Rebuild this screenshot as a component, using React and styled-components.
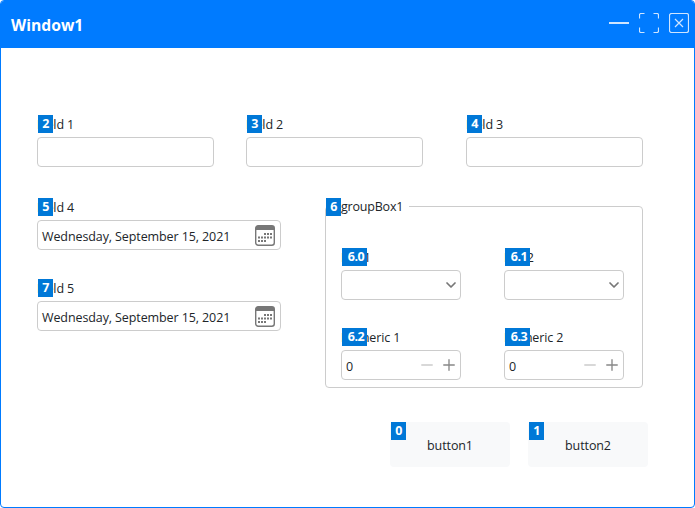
import React from "react";
import styled, { createGlobalStyle } from "styled-components";
import { ChevronDown, Minus, Plus } from "lucide-react";

const GlobalStyle = createGlobalStyle`
  html, body {
    margin: 0;
    background: #fff;
  }
  * {
    box-sizing: border-box;
  }
`;

const Window = styled.div`
  width: 695px;
  height: 508px;
  border: 1px solid #007bff;
  border-radius: 4px;
  background: #fff;
  color: #212529;
  font-family: "Open Sans", "Noto Sans", sans-serif;
  font-size: 12.5px;
  letter-spacing: -0.1px;
  overflow: hidden;
`;

const TitleBar = styled.header`
  height: 47px;
  background: #007bff;
  display: flex;
  align-items: center;
  justify-content: space-between;
  padding: 0 5px 0 10px;
  color: #fff;
`;

const Title = styled.h1`
  margin: 0;
  font-size: 15.7px;
  font-weight: 700;
  letter-spacing: 0;
`;

const WindowControls = styled.div`
  display: flex;
  gap: 10px;
  margin-bottom: 3px;
`;

const ControlIcon = styled.svg`
  width: 20px;
  height: 20px;
  fill: none;
  stroke: #cfe5ff;
  stroke-width: 1.2;
  display: block;
`;

const Content = styled.main`
  padding: 67px 51px 0 36px;
`;

const TopRow = styled.div`
  display: grid;
  grid-template-columns: 209px 220px 177px;
`;

const MiddleRow = styled.div`
  display: flex;
  justify-content: space-between;
  margin-top: 31px;
`;

const LeftColumn = styled.div`
  width: 244px;
  display: flex;
  flex-direction: column;
  gap: 29px;
`;

const Field = styled.div`
  position: relative;
  width: ${(p) => p.$width || "100%"};
`;

const Label = styled.label`
  display: block;
  height: 18px;
  line-height: 20px;
  margin-bottom: 4px;
`;

const Badge = styled.span`
  position: absolute;
  top: 0;
  left: ${(p) => p.$left ?? 1}px;
  width: ${(p) => (p.$wide ? 25 : 15)}px;
  height: 18px;
  padding-left: ${(p) => (p.$wide ? 3 : 0)}px;
  background: #0078d7;
  color: #fff;
  font-size: 12.5px;
  font-weight: 700;
  letter-spacing: -0.5px;
  line-height: 17px;
  text-align: center;
`;

const InputBox = styled.div`
  height: 30px;
  border: 1px solid #ccc;
  border-radius: 4px;
  display: flex;
  align-items: center;
  justify-content: space-between;
  padding: 0 ${(p) => p.$right ?? 5}px 0 4px;
  background: #fff;
`;

const Value = styled.span`
  padding-top: 2px;
`;

const CalendarIcon = styled.svg`
  width: 20px;
  height: 21px;
  display: block;
`;

const GroupBox = styled.fieldset`
  width: 318px;
  height: 190px;
  margin: 0;
  padding: 34px 15px 0;
  border: 1px solid #ccc;
  border-radius: 4px;
`;

const Legend = styled.legend`
  position: relative;
  height: 16px;
  padding: 0 6px 0 15px;
  margin-left: -15px;
  line-height: 18px;
  letter-spacing: -0.2px;
`;

const GroupGrid = styled.div`
  display: grid;
  grid-template-columns: 120px 120px;
  column-gap: 43px;
  row-gap: 28px;
`;

const Footer = styled.div`
  display: flex;
  justify-content: flex-end;
  gap: 18px;
  margin: 34px -5px 0 0;
`;

const ActionButton = styled.button`
  position: relative;
  width: 120px;
  height: 45px;
  border: none;
  border-radius: 4px;
  background: #f8f9fa;
  color: #212529;
  font: inherit;
  letter-spacing: inherit;
  padding: 2px 0 0;
`;

const Stepper = styled.div`
  display: flex;
  gap: 4px;
  align-items: center;
`;

const Calendar = () => (
  <CalendarIcon viewBox="0 0 20 21">
    <rect x=".7" y=".7" width="18.6" height="19.6" rx="2.5" fill="#fff" stroke="#777" strokeWidth="1.4" />
    <path d="M.7 3.2A2.5 2.5 0 0 1 3.2.7h13.6a2.5 2.5 0 0 1 2.5 2.5V5H.7z" fill="#777" />
    <path
      d="M9 9h8M3 12.5h14M3 16h8"
      stroke="#777"
      strokeWidth="2"
      strokeDasharray="2 1"
    />
  </CalendarIcon>
);

const DateField = ({ label, badge }) => (
  <Field>
    <Badge>{badge}</Badge>
    <Label>{label}</Label>
    <InputBox>
      <Value>Wednesday, September 15, 2021</Value>
      <Calendar />
    </InputBox>
  </Field>
);

const SelectField = ({ label, badge }) => (
  <Field>
    <Badge $wide>{badge}</Badge>
    <Label>{label}</Label>
    <InputBox $right={1}>
      <span />
      <ChevronDown size={16} color="#777" strokeWidth={2.6} />
    </InputBox>
  </Field>
);

const NumericField = ({ label, badge }) => (
  <Field>
    <Badge $wide>{badge}</Badge>
    <Label>{label}</Label>
    <InputBox $right={2}>
      <Value>0</Value>
      <Stepper>
        <Minus size={18} color="#ccc" strokeWidth={1.8} />
        <Plus size={18} color="#888" strokeWidth={1.8} />
      </Stepper>
    </InputBox>
  </Field>
);

const TextField = ({ label, badge }) => (
  <Field $width="177px">
    <Badge>{badge}</Badge>
    <Label>{label}</Label>
    <InputBox />
  </Field>
);

export default function App() {
  return (
    <>
      <GlobalStyle />
      <Window>
        <TitleBar>
          <Title>Window1</Title>
          <WindowControls>
            <ControlIcon viewBox="0 0 20 20">
              <path d="M0 10h20" strokeWidth="2" />
            </ControlIcon>
            <ControlIcon viewBox="0 0 20 20">
              <path d="M.5 5.5V2A1.5 1.5 0 0 1 2 .5h3.5M14.5.5H18A1.5 1.5 0 0 1 19.5 2v3.5M19.5 14.5V18a1.5 1.5 0 0 1-1.5 1.5h-3.5M5.5 19.5H2A1.5 1.5 0 0 1 .5 18v-3.5" />
            </ControlIcon>
            <ControlIcon viewBox="0 0 20 20">
              <rect x=".5" y=".5" width="19" height="19" rx="2" />
              <path d="M6 6l8 8M14 6l-8 8" />
            </ControlIcon>
          </WindowControls>
        </TitleBar>
        <Content>
          <TopRow>
            <TextField label="Field 1" badge="2" />
            <TextField label="Field 2" badge="3" />
            <TextField label="Field 3" badge="4" />
          </TopRow>
          <MiddleRow>
            <LeftColumn>
              <DateField label="Field 4" badge="5" />
              <DateField label="Field 5" badge="7" />
            </LeftColumn>
            <GroupBox>
              <Legend>
                <Badge $left={0}>6</Badge>
                groupBox1
              </Legend>
              <GroupGrid>
                <SelectField label="List 1" badge="6.0" />
                <SelectField label="List 2" badge="6.1" />
                <NumericField label="Numeric 1" badge="6.2" />
                <NumericField label="Numeric 2" badge="6.3" />
              </GroupGrid>
            </GroupBox>
          </MiddleRow>
          <Footer>
            <ActionButton>
              <Badge>0</Badge>
              button1
            </ActionButton>
            <ActionButton>
              <Badge>1</Badge>
              button2
            </ActionButton>
          </Footer>
        </Content>
      </Window>
    </>
  );
}
